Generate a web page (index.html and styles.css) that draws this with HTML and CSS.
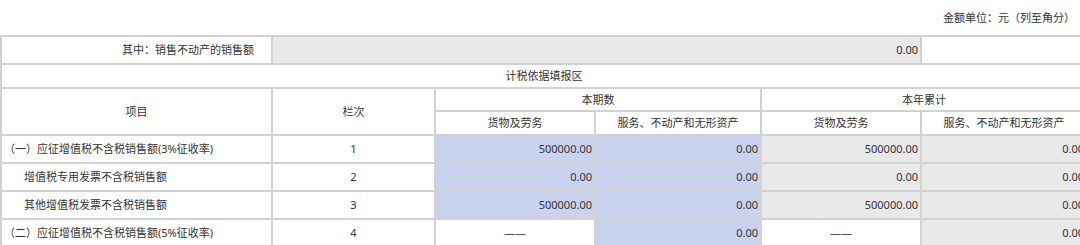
FILE: index.html
```html
<!DOCTYPE html>
<html lang="zh-CN">
<head>
<meta charset="utf-8">
<title>计税依据填报区</title>
<link rel="stylesheet" href="styles.css">
</head>
<body>
<div class="page">
  <div class="unit">金额单位：元（列至角分）</div>
  <table class="grid">
    <colgroup>
      <col class="c-item"><col class="c-no"><col class="c-a"><col class="c-b"><col class="c-a"><col class="c-b">
    </colgroup>
    <tbody>
      <tr class="r-top">
        <td class="lbl-right">其中：销售不动产的销售额</td>
        <td class="num gray" colspan="4">0.00</td>
        <td></td>
      </tr>
      <tr class="r-sec">
        <td class="center" colspan="6">计税依据填报区</td>
      </tr>
      <tr class="r-h1">
        <td class="center" rowspan="2">项目</td>
        <td class="center" rowspan="2">栏次</td>
        <td class="center" colspan="2">本期数</td>
        <td class="center" colspan="2">本年累计</td>
      </tr>
      <tr class="r-h2">
        <td class="center">货物及劳务</td>
        <td class="center">服务、不动产和无形资产</td>
        <td class="center">货物及劳务</td>
        <td class="center">服务、不动产和无形资产</td>
      </tr>
      <tr class="r-data">
        <td class="lbl">（一）应征增值税不含税销售额(3%征收率)</td>
        <td class="center">1</td>
        <td class="num blue">500000.00</td>
        <td class="num blue">0.00</td>
        <td class="num gray">500000.00</td>
        <td class="num gray">0.00</td>
      </tr>
      <tr class="r-data">
        <td class="lbl sub">增值税专用发票不含税销售额</td>
        <td class="center">2</td>
        <td class="num blue">0.00</td>
        <td class="num blue">0.00</td>
        <td class="num gray">0.00</td>
        <td class="num gray">0.00</td>
      </tr>
      <tr class="r-data">
        <td class="lbl sub">其他增值税发票不含税销售额</td>
        <td class="center">3</td>
        <td class="num blue">500000.00</td>
        <td class="num blue">0.00</td>
        <td class="num gray">500000.00</td>
        <td class="num gray">0.00</td>
      </tr>
      <tr class="r-data">
        <td class="lbl">（二）应征增值税不含税销售额(5%征收率)</td>
        <td class="center">4</td>
        <td class="center dash">——</td>
        <td class="num blue">0.00</td>
        <td class="center dash">——</td>
        <td class="num gray">0.00</td>
      </tr>
    </tbody>
  </table>
</div>
</body>
</html>
```

FILE: styles.css
```css
html, body {
  margin: 0;
  padding: 0;
  background: #ffffff;
}

body {
  font-family: "Noto Sans", "Noto Sans CJK SC", sans-serif;
  font-size: 11px;
  color: #333333;
  overflow: hidden;
}

.page {
  width: 1088px;
}

.unit {
  height: 35px;
  line-height: 35px;
  text-align: right;
  padding-right: 5px;
  box-sizing: border-box;
  width: 1080px;
}

.grid {
  border-collapse: separate;
  border-spacing: 0;
  table-layout: fixed;
  width: 1088px;
  border-top: 2px solid #d2d2d2;
  border-left: 2px solid #d2d2d2;
}

.c-item { width: 271px; }
.c-no { width: 163px; }
.c-a { width: 160px; }
.c-b { width: 166px; }

.grid td {
  border-right: 2px solid #d2d2d2;
  border-bottom: 2px solid #d2d2d2;
  padding: 0 2px;
  vertical-align: middle;
  white-space: nowrap;
  overflow: hidden;
  line-height: 14px;
}

.r-top { height: 28px; }
.r-sec { height: 24px; }
.r-h1 { height: 23px; }
.r-h2 { height: 24px; }
.r-data { height: 28px; }

.center { text-align: center; }
.num { text-align: right; }
.lbl { text-align: left; padding-left: 4px; }
.lbl.sub { padding-left: 22px; }
.grid td.lbl-right { text-align: right; padding-right: 17px; }

.gray { background: #e9e9e9; }
.blue { background: #cad3ee; }
.dash { color: #555555; }
```
